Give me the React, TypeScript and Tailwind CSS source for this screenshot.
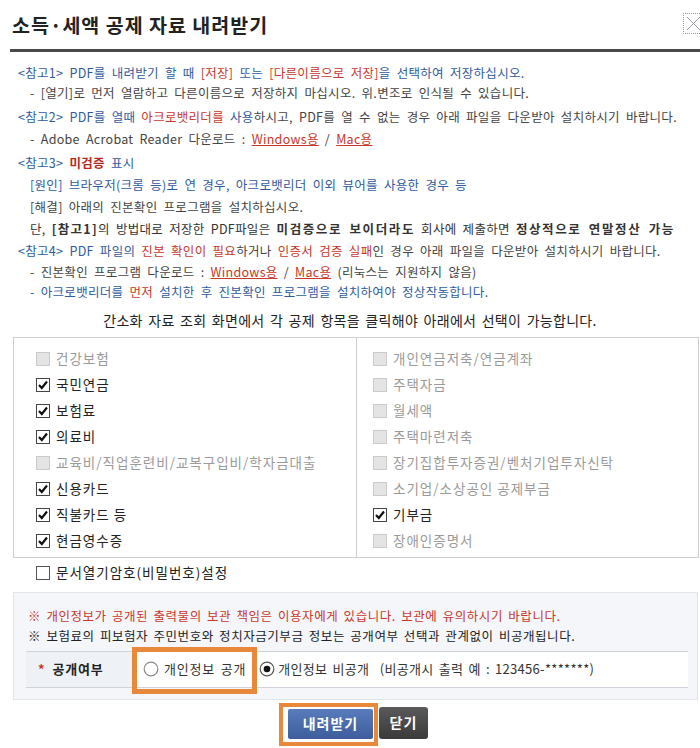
import React from "react";

const BLUE = "text-[#2f5b9f]";
const RED = "text-[#c8372b]";

function Check({ state }: { state: "on" | "off" | "dis" }) {
  if (state === "dis")
    return (
      <svg width="14" height="14" viewBox="0 0 14 14" className="shrink-0">
        <rect x="0.5" y="0.5" width="13" height="13" fill="#e4e4e4" stroke="#cacaca" />
      </svg>
    );
  if (state === "off")
    return (
      <svg width="14" height="14" viewBox="0 0 14 14" className="shrink-0">
        <rect x="0.5" y="0.5" width="13" height="13" fill="#fff" stroke="#555" />
      </svg>
    );
  return (
    <svg width="14" height="14" viewBox="0 0 14 14" className="shrink-0">
      <rect x="0.5" y="0.5" width="13" height="13" fill="#fff" stroke="#444" />
      <path d="M3 7 L5.8 10 L11 3.5" fill="none" stroke="#111" strokeWidth="2.2" />
    </svg>
  );
}

function Item({ label, state }: { label: string; state: "on" | "off" | "dis" }) {
  return (
    <div className="flex h-[26px] items-center gap-[6px]">
      <Check state={state} />
      <span className={state === "dis" ? "text-[#9a9a9a]" : "text-[#222]"}>{label}</span>
    </div>
  );
}

function Radio({ on }: { on: boolean }) {
  return (
    <svg width="16" height="16" viewBox="0 0 16 16" className="shrink-0">
      <circle cx="8" cy="8" r="6.8" fill="#fff" stroke={on ? "#555" : "#8a8a8a"} strokeWidth="1.2" />
      {on && <circle cx="8" cy="8" r="3.3" fill="#111" />}
    </svg>
  );
}

export default function App() {
  return (
    <div className="relative w-[700px] h-[748px] overflow-hidden bg-white font-['Noto_Sans_CJK_KR','Noto_Sans',sans-serif] text-[#444]">
      {/* header */}
      <div className="flex h-[49px] items-center pl-[12px]">
        <h1 className="text-[19.5px] font-bold tracking-[1px] text-[#222]">소득·세액 공제 자료 내려받기</h1>
        <div className="ml-auto mb-[3px] flex h-[21px] w-[21px] translate-x-[4px] items-center justify-center border border-dotted border-[#9a9a9a]">
          <svg width="17" height="17" viewBox="0 0 17 17">
            <path d="M2 2 L15 15 M15 2 L2 15" stroke="#9a9aa2" strokeWidth="1" />
          </svg>
        </div>
      </div>
      <div className="ml-[10px] h-[3px] bg-[#4a4a4a]" />

      {/* notes */}
      <div className="pl-[18px] pt-[11px] text-[12.5px] tracking-[0.3px] [word-spacing:3px]">
        <div className="leading-[20px]">
          <div className={BLUE}>
            &lt;참고1&gt; PDF를 내려받기 할 때 <span className={RED}>[저장]</span> 또는{" "}
            <span className={RED}>[다른이름으로 저장]</span>을 선택하여 저장하십시오.
          </div>
          <div className="pl-[12px]">- [열기]로 먼저 열람하고 다른이름으로 저장하지 마십시오. 위.변조로 인식될 수 있습니다.</div>
        </div>
        <div className="mt-[3px] leading-[22px]">
          <div>
            <span className={BLUE}>&lt;참고2&gt; PDF를 열때 </span>
            <span className={RED}>아크로뱃리더를</span>
            <span className={BLUE}> 사용</span>하시고, PDF를 열 수 없는 경우 아래 파일을 다운받아 설치하시기 바랍니다.
          </div>
          <div className="pl-[12px]">
            - Adobe Acrobat Reader 다운로드 : <span className={`${RED} underline`}>Windows용</span> /{" "}
            <span className={`${RED} underline`}>Mac용</span>
          </div>
        </div>
        <div className="mt-[2px] leading-[22px]">
          <div className={BLUE}>
            &lt;참고3&gt; <span className="font-bold text-[#b52a20]">미검증</span> 표시
          </div>
          <div className={`pl-[12px] ${BLUE}`}>[원인] 브라우저(크롬 등)로 연 경우, 아크로뱃리더 이외 뷰어를 사용한 경우 등</div>
          <div className="pl-[12px]">[해결] 아래의 진본확인 프로그램을 설치하십시오.</div>
          <div className="pl-[12px] text-[#333]">
            단, <b className="tracking-[1.3px]">[참고1]</b>의 방법대로 저장한 PDF파일은{" "}
            <b className="tracking-[1.6px]">미검증으로 보이더라도</b> 회사에 제출하면{" "}
            <b className="tracking-[1.6px]">정상적으로 연말정산 가능</b>
          </div>
        </div>
        <div className="mt-[1px] leading-[20.5px]">
          <div>
            <span className={BLUE}>&lt;참고4&gt; PDF 파일의 </span>
            <span className={RED}>진본 확인이 필요</span>하거나 <span className={RED}>인증서 검증 실패</span>인 경우 아래 파일을
            다운받아 설치하시기 바랍니다.
          </div>
          <div className="pl-[12px]">
            - 진본확인 프로그램 다운로드 : <span className={`${RED} underline`}>Windows용</span> /{" "}
            <span className={`${RED} underline`}>Mac용</span> (리눅스는 지원하지 않음)
          </div>
          <div className={`pl-[12px] ${BLUE}`}>
            - 아크로뱃리더를 <span className={RED}>먼저</span> 설치한 후 진본확인 프로그램을 설치하여야 정상작동합니다.
          </div>
        </div>
      </div>

      {/* heading */}
      <div className="mt-[7px] text-center text-[14px] leading-[20px] tracking-[0.3px] text-[#222] [word-spacing:2px]">
        간소화 자료 조회 화면에서 각 공제 항목을 클릭해야 아래에서 선택이 가능합니다.
      </div>

      {/* checkbox box */}
      <div className="ml-[13px] mt-[7px] flex w-[686px] border border-[#cfcfcf] text-[13.5px] tracking-[1px]">
        <div className="w-[343px] border-r border-[#cfcfcf] pl-[22px] pt-[8px] pb-[3px]">
          <Item label="건강보험" state="dis" />
          <Item label="국민연금" state="on" />
          <Item label="보험료" state="on" />
          <Item label="의료비" state="on" />
          <Item label="교육비/직업훈련비/교복구입비/학자금대출" state="dis" />
          <Item label="신용카드" state="on" />
          <Item label="직불카드 등" state="on" />
          <Item label="현금영수증" state="on" />
        </div>
        <div className="flex-1 pl-[16px] pt-[8px]">
          <Item label="개인연금저축/연금계좌" state="dis" />
          <Item label="주택자금" state="dis" />
          <Item label="월세액" state="dis" />
          <Item label="주택마련저축" state="dis" />
          <Item label="장기집합투자증권/벤처기업투자신탁" state="dis" />
          <Item label="소기업/소상공인 공제부금" state="dis" />
          <Item label="기부금" state="on" />
          <Item label="장애인증명서" state="dis" />
        </div>
      </div>

      <div className="ml-[36px] flex h-[30px] items-center gap-[6px] text-[13.5px] tracking-[1px] text-[#222]">
        <Check state="off" />
        <span>문서열기암호(비밀번호)설정</span>
      </div>

      {/* lower panel */}
      <div className="ml-[13px] mt-[4px] h-[108px] w-[685px] border border-[#e0e4ec] bg-[#f4f6fa] px-[12px] pt-[13px] text-[12.5px] tracking-[0.55px] [word-spacing:2px]">
        <div className="pl-[2px] leading-[20px] text-[#c8372b]">
          ※ 개인정보가 공개된 출력물의 보관 책임은 이용자에게 있습니다. 보관에 유의하시기 바랍니다.
        </div>
        <div className="pl-[2px] leading-[20px] text-[#222]">
          ※ 보험료의 피보험자 주민번호와 정치자금기부금 정보는 공개여부 선택과 관계없이 비공개됩니다.
        </div>
        <div className="mt-[5px] flex h-[37px] w-[662px] items-center border-y border-[#cdd2db] bg-white text-[13px] tracking-[0.8px]">
          <div className="flex h-full w-[106px] items-center bg-[#eef1f6] pl-[12px] font-bold text-[#222]">
            <span className="mr-[7px] text-[#c8372b]">*</span>공개여부
          </div>
          <div className="relative flex h-full items-center gap-[5px] pl-[11px] pr-[11px] text-[#333]">
            <div className="pointer-events-none absolute left-0 right-0 top-[-5px] bottom-[-7px] border-[5px] border-[#e8883a]" />
            <Radio on={false} />
            <span>개인정보 공개</span>
          </div>
          <div className="ml-[2px] flex items-center gap-[3px] text-[#333]">
            <Radio on={true} />
            <span className="tracking-[0.3px]">개인정보 비공개 &nbsp;(비공개시 출력 예 : 123456-*******)</span>
          </div>
        </div>
      </div>

      {/* buttons */}
      <div className="mt-[3px] flex justify-center pl-[7px]">
        <div className="flex h-[43px] items-start border-[4px] border-[#e8883a] bg-white pl-[5px] pr-[1px] pt-[2px]">
          <button className="h-[30px] w-[85px] rounded-[2px] bg-gradient-to-b from-[#5a7cbc] to-[#3d5d9c] text-[14px] font-bold tracking-[1px] text-white">
            내려받기
          </button>
        </div>
        <button className="mt-[4px] ml-[1px] h-[32px] w-[49px] rounded-[3px] bg-gradient-to-b from-[#5a5a5a] to-[#3a3a3a] text-[14px] font-bold tracking-[1px] text-white">
          닫기
        </button>
      </div>
    </div>
  );
}
